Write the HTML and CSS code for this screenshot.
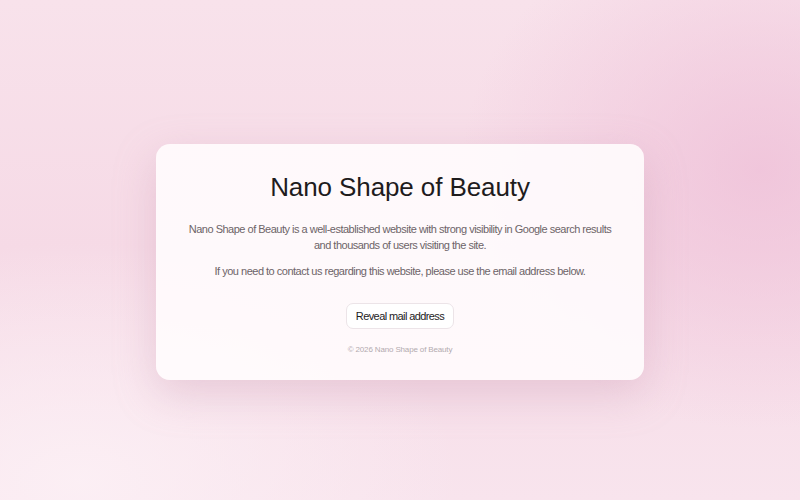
FILE: index.html
```html
<!DOCTYPE html>
<html lang="en">
<head>
<meta charset="utf-8">
<title>Nano Shape of Beauty</title>
<link rel="stylesheet" href="styles.css">
</head>
<body>
<main class="page">
  <section class="card">
    <h1 class="title">Nano Shape of Beauty</h1>
    <p class="text">Nano Shape of Beauty is a well-established website with strong visibility in Google search results and thousands of users visiting the site.</p>
    <p class="text">If you need to contact us regarding this website, please use the email address below.</p>
    <button class="btn" type="button">Reveal mail address</button>
    <p class="foot">© 2026 Nano Shape of Beauty</p>
  </section>
</main>
</body>
</html>
```
FILE: styles.css
```css
html, body {
  margin: 0;
  padding: 0;
  height: 100%;
}
body {
  font-family: "Liberation Sans", Arial, sans-serif;
  background:
    radial-gradient(ellipse 300px 260px at 760px 170px, rgba(238, 190, 215, 0.75), rgba(238, 190, 215, 0) 100%),
    radial-gradient(ellipse 380px 240px at 80px 480px, rgba(252, 240, 245, 0.9), rgba(252, 240, 245, 0) 100%),
    linear-gradient(180deg, #f8e2eb 0%, #f6dae6 50%, #f8e4ed 100%);
}
.page {
  height: 100%;
  display: flex;
  align-items: center;
  justify-content: center;
}
.card {
  width: 488px;
  box-sizing: border-box;
  padding: 27px 24px 25px;
  background: rgba(255, 252, 253, 0.9);
  border-radius: 14px;
  box-shadow: 0 14px 40px rgba(200, 150, 175, 0.35);
  text-align: center;
  margin-top: 24px;
}
.title {
  margin: 0 0 18px;
  font-size: 26px;
  font-weight: 400;
  color: #1e1c1d;
  line-height: 32px;
  letter-spacing: -0.1px;
}
.text {
  margin: 0 0 10px;
  font-size: 11px;
  line-height: 16px;
  color: #6d6468;
  letter-spacing: -0.5px;
}
.btn {
  margin-top: 14px;
  height: 26px;
  padding: 0 9px;
  font-family: inherit;
  font-size: 11px;
  letter-spacing: -0.6px;
  color: #1e1c1d;
  background: #ffffff;
  border: 1px solid #ece4e8;
  border-radius: 7px;
  vertical-align: top;
}
.foot {
  margin: 16px 0 0;
  font-size: 8px;
  line-height: 10px;
  letter-spacing: -0.15px;
  color: #b3abaf;
}
```
